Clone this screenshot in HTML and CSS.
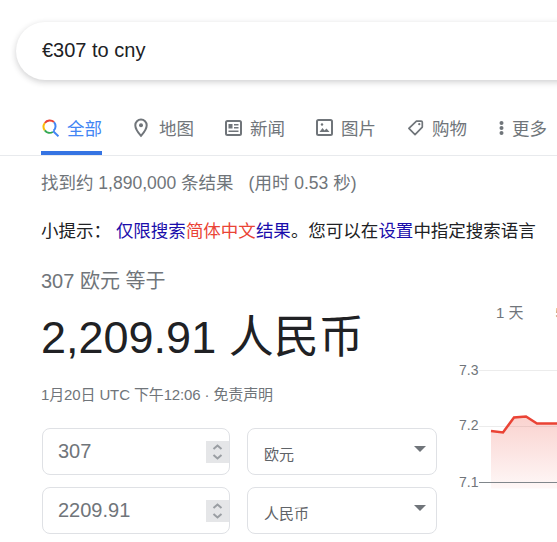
FILE: index.html
```html
<!DOCTYPE html>
<html lang="en">
<head>
    <meta charset="UTF-8">
    <meta name="viewport" content="width=device-width, initial-scale=1.0">
    <title>€307 to cny</title>
    <link rel="stylesheet" href="styles.css">
</head>
<body>
    <!-- Search box, runs off the right edge -->
    <div class="search-box">€307 to cny</div>

    <!-- Tabs -->
    <div class="tabs">
        <div class="tab active">
            <svg class="tab-icon" width="17" height="18" viewBox="0 0 17 18" fill="none" stroke-width="2">
                <path d="M12 3.100A6.300 6.300 0 0 0 2.800 4" stroke="#ea4335"/>
                <path d="M2.800 4A6.300 6.300 0 0 0 2.800 11.400" stroke="#fbbc05"/>
                <path d="M2.800 11.400A6.300 6.300 0 0 0 10.800 13" stroke="#34a853"/>
                <path d="M12 3.100A6.300 6.300 0 0 1 11.600 11.800" stroke="#4285f4"/>
                <path d="M11 12L16.500 17.300" stroke="#4285f4"/>
            </svg>
            <span>全部</span>
        </div>
        <div class="tab">
            <svg class="tab-icon" width="17" height="20" viewBox="0 0 17 20" fill="none">
                <path d="M7 1.500a5.700 5.700 0 0 0-5.700 5.700C1.300 11.500 7 17.800 7 17.800s5.700-6.300 5.700-10.600A5.700 5.700 0 0 0 7 1.500z" stroke="#70757a" stroke-width="2"/>
                <circle cx="7" cy="7.200" r="2" fill="#70757a"/>
            </svg>
            <span>地图</span>
        </div>
        <div class="tab">
            <svg class="tab-icon" width="17" height="16" viewBox="0 0 17 16" fill="none">
                <rect x="1" y="1" width="15" height="14" rx="1.500" stroke="#70757a" stroke-width="2"/>
                <rect x="3.500" y="4" width="4" height="4.500" fill="#70757a"/>
                <path d="M9 4.800h4.500M9 7.800h4.500M3.500 11.200h10" stroke="#70757a" stroke-width="1.500"/>
            </svg>
            <span>新闻</span>
        </div>
        <div class="tab">
            <svg class="tab-icon" width="17" height="17" viewBox="0 0 17 17" fill="none">
                <rect x="1" y="1" width="15" height="15" rx="1.500" stroke="#70757a" stroke-width="2"/>
                <path d="M3.500 13l3-4 2 2.500 2-2 3 3.500z" fill="#70757a"/>
                <circle cx="6" cy="5.500" r="1.200" fill="#70757a"/>
            </svg>
            <span>图片</span>
        </div>
        <div class="tab">
            <svg class="tab-icon" width="17" height="18" viewBox="0 0 18 18" fill="none">
                <path d="M10 1.800h5a1.200 1.200 0 0 1 1.200 1.200v5L8.500 16 2 9.500z" stroke="#70757a" stroke-width="1.800" stroke-linejoin="round"/>
                <circle cx="13" cy="5" r="1.200" fill="#70757a"/>
            </svg>
            <span>购物</span>
        </div>
        <div class="tab">
            <svg class="tab-icon dots" width="5" height="14" viewBox="0 0 5 14">
                <circle cx="2.500" cy="2" r="2" fill="#70757a"/>
                <circle cx="2.500" cy="7" r="2" fill="#70757a"/>
                <circle cx="2.500" cy="12" r="2" fill="#70757a"/>
            </svg>
            <span>更多</span>
        </div>
    </div>

    <div class="stats">找到约 1,890,000 条结果<span class="time">(用时 0.53 秒)</span></div>

    <div class="tip">小提示： <a class="link">仅限搜索<span class="red">简体中文</span>结果</a>。您可以在<a class="link">设置</a>中指定搜索语言</div>

    <!-- Converter -->
    <div class="converter">
        <div class="left">
            <div class="from">307 欧元 等于</div>
            <div class="result">2,209.91 人民币</div>
            <div class="date">1月20日 UTC 下午12:06 · 免责声明</div>
            <div class="form-row">
                <div class="field">307
                    <svg class="spin" width="23" height="22" viewBox="0 0 23 22" fill="none">
                        <rect width="23" height="22" fill="#e5e6e8"/>
                        <path d="M7.500 8l4-3.500 4 3.500M7.500 14l4 3.500 4-3.500" stroke="#9a9ea3" stroke-width="2"/>
                    </svg>
                </div>
                <div class="select">欧元<span class="caret"></span></div>
            </div>
            <div class="form-row">
                <div class="field">2209.91
                    <svg class="spin" width="23" height="22" viewBox="0 0 23 22" fill="none">
                        <rect width="23" height="22" fill="#e5e6e8"/>
                        <path d="M7.500 8l4-3.500 4 3.500M7.500 14l4 3.500 4-3.500" stroke="#9a9ea3" stroke-width="2"/>
                    </svg>
                </div>
                <div class="select">人民币<span class="caret"></span></div>
            </div>
        </div>
        <div class="right">
            <div class="ranges"><span>1 天</span><span>5 天</span></div>
            <svg class="chart" width="98" height="140" viewBox="0 0 98 140">
                <defs>
                    <linearGradient id="area" x1="0" y1="0" x2="0" y2="1">
                        <stop offset="0" stop-color="#ea4335" stop-opacity="0.24"/>
                        <stop offset="1" stop-color="#ea4335" stop-opacity="0.04"/>
                    </linearGradient>
                </defs>
                <text x="0" y="15.500" class="axis">7.3</text>
                <text x="0" y="71" class="axis">7.2</text>
                <text x="0" y="127.500" class="axis">7.1</text>
                <path d="M20 11.500H98M20 67.500H98" stroke="#ececec" stroke-width="1"/>
                <path d="M32 72L44 73.500 55 58.500 67 57.500 78 64.500H98V129.500H32z" fill="url(#area)"/>
                <path d="M20 123.500H98" stroke="#80868b" stroke-width="1"/>
                <path d="M32 72L44 73.500 55 58.500 67 57.500 78 64.500H98" fill="none" stroke="#ea4335" stroke-width="2.500"/>
            </svg>
        </div>
    </div>
</body>
</html>
```

FILE: styles.css
```css
body {
    margin: 0;
    width: 557px;
    height: 542px;
    overflow: hidden;
    background-color: #fff;
    font-family: "Liberation Sans", "Noto Sans CJK SC", sans-serif;
    color: #70757a;
}
.search-box {
    box-sizing: border-box;
    width: 700px;
    height: 58px;
    margin: 22px 0 0 16px;
    padding: 0 0 2px 26px;
    display: flex;
    align-items: center;
    border-radius: 29px;
    box-shadow: 0 2px 6px rgba(32, 33, 36, 0.22);
    font-size: 20px;
    color: #202124;
}
.tabs {
    display: flex;
    height: 76px;
    padding-left: 41px;
    border-bottom: 1px solid #e8eaed;
    box-sizing: border-box;
}
.tab {
    display: flex;
    flex: none;
    align-items: center;
    gap: 8px;
    height: 45px;
    margin-top: 30px;
    margin-right: 30px;
    padding-bottom: 10px;
    font-size: 17.5px;
    white-space: nowrap;
    box-sizing: border-box;
}
.tab.active {
    color: #4285f4;
    border-bottom: 4px solid #3574e3;
    width: 61px;
    margin-right: 31px;
    padding-bottom: 6px;
}
.tab-icon {
    flex: none;
    margin-left: 1px;
}
.tab-icon.dots {
    margin-left: 2px;
}
.stats {
    margin: 15px 0 0 41px;
    font-size: 17.5px;
    line-height: 24px;
    white-space: nowrap;
}
.time {
    margin-left: 15px;
}
.tip {
    margin: 24px 0 0 41px;
    font-size: 17.5px;
    line-height: 24px;
    color: #202124;
    white-space: nowrap;
}
.link {
    color: #1a0dab;
}
.red {
    color: #ea4335;
}
.converter {
    display: flex;
    margin: 26px 0 0 41px;
}
.left {
    width: 418px;
    flex: none;
}
.from {
    font-size: 20px;
    line-height: 24px;
}
.result {
    margin-top: 16px;
    font-size: 45px;
    line-height: 58px;
    color: #202124;
    white-space: nowrap;
}
.date {
    margin-top: 18px;
    font-size: 15px;
    line-height: 20px;
    letter-spacing: -0.13px;
    white-space: nowrap;
}
.form-row {
    display: flex;
    gap: 17px;
    margin: 12px 0 0 1px;
}
.date + .form-row {
    margin-top: 23px;
}
.field, .select {
    box-sizing: border-box;
    height: 47px;
    border: 1px solid #dfe1e5;
    border-radius: 8px;
    display: flex;
    align-items: center;
    justify-content: space-between;
}
.field {
    width: 188px;
    padding-left: 15px;
    font-size: 20px;
}
.spin {
    flex: none;
}
.select {
    width: 190px;
    padding: 4px 10px 0 16px;
    font-size: 15px;
    color: #5f6368;
}
.caret {
    width: 0;
    height: 0;
    margin-top: -10px;
    border-left: 6px solid transparent;
    border-right: 6px solid transparent;
    border-top: 6px solid #70757a;
}
.right {
    flex: none;
}
.ranges {
    display: flex;
    gap: 32px;
    margin: 34px 0 0 37px;
    font-size: 15px;
    line-height: 20px;
    white-space: nowrap;
}
.chart {
    display: block;
    margin-top: 36px;
}
.axis {
    font-family: "Liberation Sans", sans-serif;
    font-size: 14px;
    fill: #70757a;
}
```
